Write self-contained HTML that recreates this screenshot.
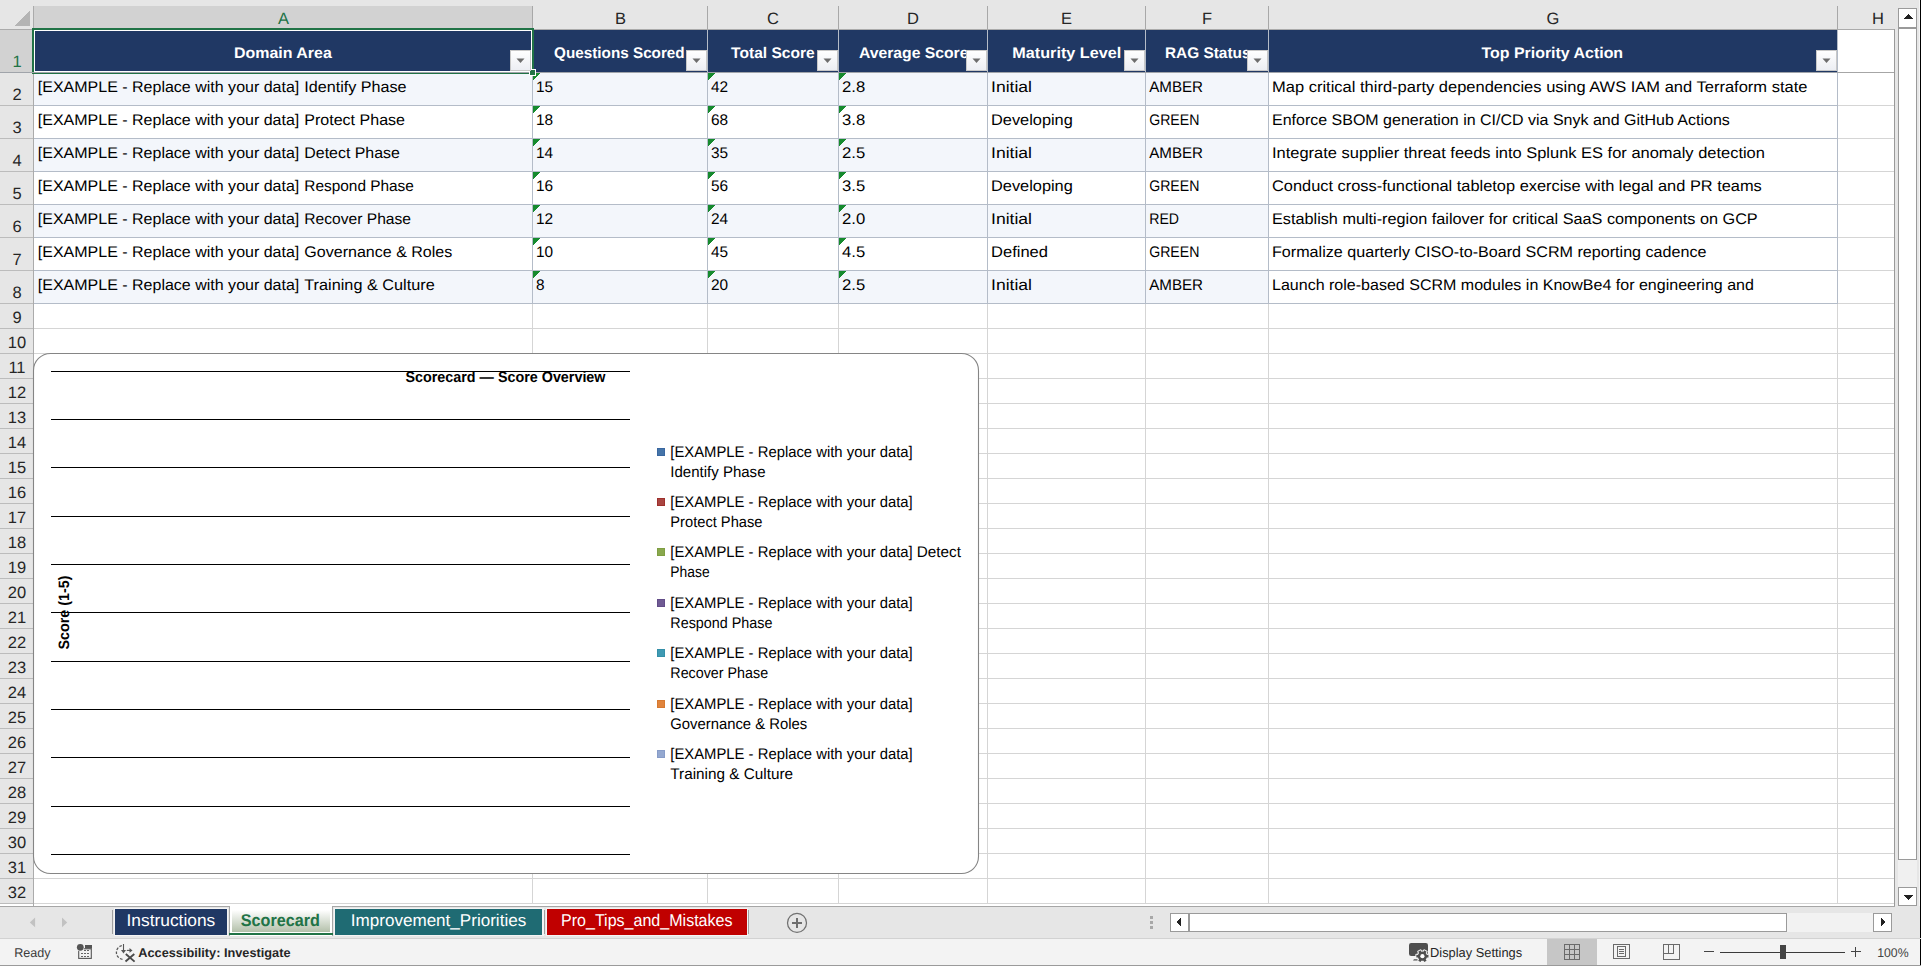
<!DOCTYPE html>
<html><head><meta charset="utf-8"><title>Scorecard</title><style>html,body{margin:0;padding:0;background:#fff;overflow:hidden;width:1921px;height:966px;}svg{display:block;} text{shape-rendering:auto;text-rendering:geometricPrecision;}</style></head><body>
<svg width="1921" height="966" viewBox="0 0 1921 966" shape-rendering="crispEdges"><defs><linearGradient id="ddg" x1="0" y1="0" x2="0" y2="1"><stop offset="0" stop-color="#ffffff"/><stop offset="1" stop-color="#eceef3"/></linearGradient><linearGradient id="tabg" x1="0" y1="0" x2="0" y2="1"><stop offset="0" stop-color="#ffffff"/><stop offset="1" stop-color="#b3c0aa"/></linearGradient></defs><rect x="0" y="0" width="1921" height="966" fill="#ffffff" />
<rect x="0" y="0" width="1920" height="6" fill="#e6e6e6" />
<rect x="0" y="6" width="1895" height="23" fill="#e6e6e6" />
<rect x="0" y="30" width="33" height="874" fill="#e6e6e6" />
<rect x="0" y="30" width="33" height="42" fill="#d2d2d2" />
<rect x="34" y="6" width="498" height="22" fill="#d2d2d2" />
<polygon points="30,10.5 30,26 14.5,26" fill="#b4b4b4"/>
<rect x="0" y="29" width="1895" height="1" fill="#ababab" />
<rect x="33" y="6" width="1" height="900" fill="#ababab" />
<rect x="532" y="6" width="1" height="23" fill="#a8a8a8" />
<rect x="707" y="6" width="1" height="23" fill="#a8a8a8" />
<rect x="838" y="6" width="1" height="23" fill="#a8a8a8" />
<rect x="987" y="6" width="1" height="23" fill="#a8a8a8" />
<rect x="1145" y="6" width="1" height="23" fill="#a8a8a8" />
<rect x="1268" y="6" width="1" height="23" fill="#a8a8a8" />
<rect x="1837" y="6" width="1" height="23" fill="#a8a8a8" />
<rect x="0" y="72" width="33" height="1" fill="#bcbcbc" />
<rect x="0" y="105" width="33" height="1" fill="#bcbcbc" />
<rect x="0" y="138" width="33" height="1" fill="#bcbcbc" />
<rect x="0" y="171" width="33" height="1" fill="#bcbcbc" />
<rect x="0" y="204" width="33" height="1" fill="#bcbcbc" />
<rect x="0" y="237" width="33" height="1" fill="#bcbcbc" />
<rect x="0" y="270" width="33" height="1" fill="#bcbcbc" />
<rect x="0" y="303" width="33" height="1" fill="#bcbcbc" />
<rect x="0" y="328" width="33" height="1" fill="#bcbcbc" />
<rect x="0" y="353" width="33" height="1" fill="#bcbcbc" />
<rect x="0" y="378" width="33" height="1" fill="#bcbcbc" />
<rect x="0" y="403" width="33" height="1" fill="#bcbcbc" />
<rect x="0" y="428" width="33" height="1" fill="#bcbcbc" />
<rect x="0" y="453" width="33" height="1" fill="#bcbcbc" />
<rect x="0" y="478" width="33" height="1" fill="#bcbcbc" />
<rect x="0" y="503" width="33" height="1" fill="#bcbcbc" />
<rect x="0" y="528" width="33" height="1" fill="#bcbcbc" />
<rect x="0" y="553" width="33" height="1" fill="#bcbcbc" />
<rect x="0" y="578" width="33" height="1" fill="#bcbcbc" />
<rect x="0" y="603" width="33" height="1" fill="#bcbcbc" />
<rect x="0" y="628" width="33" height="1" fill="#bcbcbc" />
<rect x="0" y="653" width="33" height="1" fill="#bcbcbc" />
<rect x="0" y="678" width="33" height="1" fill="#bcbcbc" />
<rect x="0" y="703" width="33" height="1" fill="#bcbcbc" />
<rect x="0" y="728" width="33" height="1" fill="#bcbcbc" />
<rect x="0" y="753" width="33" height="1" fill="#bcbcbc" />
<rect x="0" y="778" width="33" height="1" fill="#bcbcbc" />
<rect x="0" y="803" width="33" height="1" fill="#bcbcbc" />
<rect x="0" y="828" width="33" height="1" fill="#bcbcbc" />
<rect x="0" y="853" width="33" height="1" fill="#bcbcbc" />
<rect x="0" y="878" width="33" height="1" fill="#bcbcbc" />
<rect x="0" y="903" width="33" height="1" fill="#bcbcbc" />
<rect x="34" y="328" width="1860" height="1" fill="#d5d5d5" />
<rect x="34" y="353" width="1860" height="1" fill="#d5d5d5" />
<rect x="34" y="378" width="1860" height="1" fill="#d5d5d5" />
<rect x="34" y="403" width="1860" height="1" fill="#d5d5d5" />
<rect x="34" y="428" width="1860" height="1" fill="#d5d5d5" />
<rect x="34" y="453" width="1860" height="1" fill="#d5d5d5" />
<rect x="34" y="478" width="1860" height="1" fill="#d5d5d5" />
<rect x="34" y="503" width="1860" height="1" fill="#d5d5d5" />
<rect x="34" y="528" width="1860" height="1" fill="#d5d5d5" />
<rect x="34" y="553" width="1860" height="1" fill="#d5d5d5" />
<rect x="34" y="578" width="1860" height="1" fill="#d5d5d5" />
<rect x="34" y="603" width="1860" height="1" fill="#d5d5d5" />
<rect x="34" y="628" width="1860" height="1" fill="#d5d5d5" />
<rect x="34" y="653" width="1860" height="1" fill="#d5d5d5" />
<rect x="34" y="678" width="1860" height="1" fill="#d5d5d5" />
<rect x="34" y="703" width="1860" height="1" fill="#d5d5d5" />
<rect x="34" y="728" width="1860" height="1" fill="#d5d5d5" />
<rect x="34" y="753" width="1860" height="1" fill="#d5d5d5" />
<rect x="34" y="778" width="1860" height="1" fill="#d5d5d5" />
<rect x="34" y="803" width="1860" height="1" fill="#d5d5d5" />
<rect x="34" y="828" width="1860" height="1" fill="#d5d5d5" />
<rect x="34" y="853" width="1860" height="1" fill="#d5d5d5" />
<rect x="34" y="878" width="1860" height="1" fill="#d5d5d5" />
<rect x="34" y="903" width="1860" height="1" fill="#d5d5d5" />
<rect x="532" y="304" width="1" height="600" fill="#d5d5d5" />
<rect x="707" y="304" width="1" height="600" fill="#d5d5d5" />
<rect x="838" y="304" width="1" height="600" fill="#d5d5d5" />
<rect x="987" y="304" width="1" height="600" fill="#d5d5d5" />
<rect x="1145" y="304" width="1" height="600" fill="#d5d5d5" />
<rect x="1268" y="304" width="1" height="600" fill="#d5d5d5" />
<rect x="1837" y="304" width="1" height="600" fill="#d5d5d5" />
<rect x="1838" y="105" width="56" height="1" fill="#d5d5d5" />
<rect x="1838" y="138" width="56" height="1" fill="#d5d5d5" />
<rect x="1838" y="171" width="56" height="1" fill="#d5d5d5" />
<rect x="1838" y="204" width="56" height="1" fill="#d5d5d5" />
<rect x="1838" y="237" width="56" height="1" fill="#d5d5d5" />
<rect x="1838" y="270" width="56" height="1" fill="#d5d5d5" />
<rect x="1838" y="303" width="56" height="1" fill="#d5d5d5" />
<rect x="1838" y="72" width="56" height="1" fill="#a6a6a6" />
<rect x="1894" y="29" width="1" height="877" fill="#9a9a9a" />
<rect x="34" y="30" width="1803" height="42" fill="#203864" />
<rect x="34" y="73" width="1234" height="32" fill="#f3f6fb" />
<rect x="34" y="139" width="1234" height="32" fill="#f3f6fb" />
<rect x="34" y="205" width="1234" height="32" fill="#f3f6fb" />
<rect x="34" y="271" width="1234" height="32" fill="#f3f6fb" />
<rect x="34" y="105" width="1804" height="1" fill="#b4bcc8" />
<rect x="34" y="138" width="1804" height="1" fill="#b4bcc8" />
<rect x="34" y="171" width="1804" height="1" fill="#b4bcc8" />
<rect x="34" y="204" width="1804" height="1" fill="#b4bcc8" />
<rect x="34" y="237" width="1804" height="1" fill="#b4bcc8" />
<rect x="34" y="270" width="1804" height="1" fill="#b4bcc8" />
<rect x="34" y="303" width="1804" height="1" fill="#b4bcc8" />
<rect x="34" y="72" width="1804" height="1" fill="#9aa3b0" />
<rect x="532" y="73" width="1" height="231" fill="#b4bcc8" />
<rect x="707" y="73" width="1" height="231" fill="#b4bcc8" />
<rect x="838" y="73" width="1" height="231" fill="#b4bcc8" />
<rect x="987" y="73" width="1" height="231" fill="#b4bcc8" />
<rect x="1145" y="73" width="1" height="231" fill="#b4bcc8" />
<rect x="1268" y="73" width="1" height="231" fill="#b4bcc8" />
<rect x="1837" y="73" width="1" height="231" fill="#b4bcc8" />
<rect x="532" y="30" width="1" height="42" fill="#b4bcc8" />
<rect x="707" y="30" width="1" height="42" fill="#b4bcc8" />
<rect x="838" y="30" width="1" height="42" fill="#b4bcc8" />
<rect x="987" y="30" width="1" height="42" fill="#b4bcc8" />
<rect x="1145" y="30" width="1" height="42" fill="#b4bcc8" />
<rect x="1268" y="30" width="1" height="42" fill="#b4bcc8" />
<rect x="1837" y="30" width="1" height="43" fill="#b4bcc8" />
<rect x="510.5" y="50.5" width="20" height="20" fill="url(#ddg)" stroke="#c8c8c8" stroke-width="1"/>
<polygon points="516.5,58.5 524.5,58.5 520.5,63" fill="#6d6d6d" shape-rendering="auto"/>
<rect x="686.5" y="50.5" width="20" height="20" fill="url(#ddg)" stroke="#c8c8c8" stroke-width="1"/>
<polygon points="692.5,58.5 700.5,58.5 696.5,63" fill="#6d6d6d" shape-rendering="auto"/>
<rect x="817.5" y="50.5" width="20" height="20" fill="url(#ddg)" stroke="#c8c8c8" stroke-width="1"/>
<polygon points="823.5,58.5 831.5,58.5 827.5,63" fill="#6d6d6d" shape-rendering="auto"/>
<rect x="966.5" y="50.5" width="20" height="20" fill="url(#ddg)" stroke="#c8c8c8" stroke-width="1"/>
<polygon points="972.5,58.5 980.5,58.5 976.5,63" fill="#6d6d6d" shape-rendering="auto"/>
<rect x="1124.5" y="50.5" width="20" height="20" fill="url(#ddg)" stroke="#c8c8c8" stroke-width="1"/>
<polygon points="1130.5,58.5 1138.5,58.5 1134.5,63" fill="#6d6d6d" shape-rendering="auto"/>
<rect x="1247.5" y="50.5" width="20" height="20" fill="url(#ddg)" stroke="#c8c8c8" stroke-width="1"/>
<polygon points="1253.5,58.5 1261.5,58.5 1257.5,63" fill="#6d6d6d" shape-rendering="auto"/>
<rect x="1816.5" y="50.5" width="20" height="20" fill="url(#ddg)" stroke="#c8c8c8" stroke-width="1"/>
<polygon points="1822.5,58.5 1830.5,58.5 1826.5,63" fill="#6d6d6d" shape-rendering="auto"/>
<polygon points="533,73 540,73 533,80" fill="#168a2e"/>
<polygon points="533,106 540,106 533,113" fill="#168a2e"/>
<polygon points="533,139 540,139 533,146" fill="#168a2e"/>
<polygon points="533,172 540,172 533,179" fill="#168a2e"/>
<polygon points="533,205 540,205 533,212" fill="#168a2e"/>
<polygon points="533,238 540,238 533,245" fill="#168a2e"/>
<polygon points="533,271 540,271 533,278" fill="#168a2e"/>
<polygon points="708,73 715,73 708,80" fill="#168a2e"/>
<polygon points="708,106 715,106 708,113" fill="#168a2e"/>
<polygon points="708,139 715,139 708,146" fill="#168a2e"/>
<polygon points="708,172 715,172 708,179" fill="#168a2e"/>
<polygon points="708,205 715,205 708,212" fill="#168a2e"/>
<polygon points="708,238 715,238 708,245" fill="#168a2e"/>
<polygon points="708,271 715,271 708,278" fill="#168a2e"/>
<polygon points="839,73 846,73 839,80" fill="#168a2e"/>
<polygon points="839,106 846,106 839,113" fill="#168a2e"/>
<polygon points="839,139 846,139 839,146" fill="#168a2e"/>
<polygon points="839,172 846,172 839,179" fill="#168a2e"/>
<polygon points="839,205 846,205 839,212" fill="#168a2e"/>
<polygon points="839,238 846,238 839,245" fill="#168a2e"/>
<polygon points="839,271 846,271 839,278" fill="#168a2e"/>
<rect x="32" y="28" width="502" height="2" fill="#217346" />
<rect x="32" y="28" width="2" height="45" fill="#217346" />
<rect x="532" y="28" width="2" height="41" fill="#217346" />
<rect x="34" y="30" width="498" height="1" fill="#ffffff" />
<rect x="34" y="30" width="1" height="42" fill="#ffffff" />
<rect x="531" y="30" width="1" height="40" fill="#ffffff" />
<rect x="34" y="71" width="496" height="1" fill="#ffffff" />
<rect x="0" y="72" width="1838" height="1" fill="#a0a4aa" />
<rect x="32" y="73" width="498" height="1" fill="#217346" />
<rect x="529" y="69" width="7" height="7" fill="#ffffff" />
<rect x="530" y="70" width="5" height="5" fill="#217346" />
<text x="283.5" y="24" font-family="Liberation Sans" font-size="16.5" font-weight="normal" fill="#217346" text-anchor="middle" >A</text>
<text x="620.5" y="24" font-family="Liberation Sans" font-size="16.5" font-weight="normal" fill="#262626" text-anchor="middle" >B</text>
<text x="773" y="24" font-family="Liberation Sans" font-size="16.5" font-weight="normal" fill="#262626" text-anchor="middle" >C</text>
<text x="913" y="24" font-family="Liberation Sans" font-size="16.5" font-weight="normal" fill="#262626" text-anchor="middle" >D</text>
<text x="1066.5" y="24" font-family="Liberation Sans" font-size="16.5" font-weight="normal" fill="#262626" text-anchor="middle" >E</text>
<text x="1207" y="24" font-family="Liberation Sans" font-size="16.5" font-weight="normal" fill="#262626" text-anchor="middle" >F</text>
<text x="1553" y="24" font-family="Liberation Sans" font-size="16.5" font-weight="normal" fill="#262626" text-anchor="middle" >G</text>
<text x="1878" y="24" font-family="Liberation Sans" font-size="16.5" font-weight="normal" fill="#262626" text-anchor="middle" >H</text>
<text x="17" y="67" font-family="Liberation Sans" font-size="16.5" font-weight="normal" fill="#217346" text-anchor="middle" >1</text>
<text x="17" y="100" font-family="Liberation Sans" font-size="16.5" font-weight="normal" fill="#262626" text-anchor="middle" >2</text>
<text x="17" y="133" font-family="Liberation Sans" font-size="16.5" font-weight="normal" fill="#262626" text-anchor="middle" >3</text>
<text x="17" y="166" font-family="Liberation Sans" font-size="16.5" font-weight="normal" fill="#262626" text-anchor="middle" >4</text>
<text x="17" y="199" font-family="Liberation Sans" font-size="16.5" font-weight="normal" fill="#262626" text-anchor="middle" >5</text>
<text x="17" y="232" font-family="Liberation Sans" font-size="16.5" font-weight="normal" fill="#262626" text-anchor="middle" >6</text>
<text x="17" y="265" font-family="Liberation Sans" font-size="16.5" font-weight="normal" fill="#262626" text-anchor="middle" >7</text>
<text x="17" y="298" font-family="Liberation Sans" font-size="16.5" font-weight="normal" fill="#262626" text-anchor="middle" >8</text>
<text x="17" y="323" font-family="Liberation Sans" font-size="16.5" font-weight="normal" fill="#262626" text-anchor="middle" >9</text>
<text x="17" y="348" font-family="Liberation Sans" font-size="16.5" font-weight="normal" fill="#262626" text-anchor="middle" >10</text>
<text x="17" y="373" font-family="Liberation Sans" font-size="16.5" font-weight="normal" fill="#262626" text-anchor="middle" >11</text>
<text x="17" y="398" font-family="Liberation Sans" font-size="16.5" font-weight="normal" fill="#262626" text-anchor="middle" >12</text>
<text x="17" y="423" font-family="Liberation Sans" font-size="16.5" font-weight="normal" fill="#262626" text-anchor="middle" >13</text>
<text x="17" y="448" font-family="Liberation Sans" font-size="16.5" font-weight="normal" fill="#262626" text-anchor="middle" >14</text>
<text x="17" y="473" font-family="Liberation Sans" font-size="16.5" font-weight="normal" fill="#262626" text-anchor="middle" >15</text>
<text x="17" y="498" font-family="Liberation Sans" font-size="16.5" font-weight="normal" fill="#262626" text-anchor="middle" >16</text>
<text x="17" y="523" font-family="Liberation Sans" font-size="16.5" font-weight="normal" fill="#262626" text-anchor="middle" >17</text>
<text x="17" y="548" font-family="Liberation Sans" font-size="16.5" font-weight="normal" fill="#262626" text-anchor="middle" >18</text>
<text x="17" y="573" font-family="Liberation Sans" font-size="16.5" font-weight="normal" fill="#262626" text-anchor="middle" >19</text>
<text x="17" y="598" font-family="Liberation Sans" font-size="16.5" font-weight="normal" fill="#262626" text-anchor="middle" >20</text>
<text x="17" y="623" font-family="Liberation Sans" font-size="16.5" font-weight="normal" fill="#262626" text-anchor="middle" >21</text>
<text x="17" y="648" font-family="Liberation Sans" font-size="16.5" font-weight="normal" fill="#262626" text-anchor="middle" >22</text>
<text x="17" y="673" font-family="Liberation Sans" font-size="16.5" font-weight="normal" fill="#262626" text-anchor="middle" >23</text>
<text x="17" y="698" font-family="Liberation Sans" font-size="16.5" font-weight="normal" fill="#262626" text-anchor="middle" >24</text>
<text x="17" y="723" font-family="Liberation Sans" font-size="16.5" font-weight="normal" fill="#262626" text-anchor="middle" >25</text>
<text x="17" y="748" font-family="Liberation Sans" font-size="16.5" font-weight="normal" fill="#262626" text-anchor="middle" >26</text>
<text x="17" y="773" font-family="Liberation Sans" font-size="16.5" font-weight="normal" fill="#262626" text-anchor="middle" >27</text>
<text x="17" y="798" font-family="Liberation Sans" font-size="16.5" font-weight="normal" fill="#262626" text-anchor="middle" >28</text>
<text x="17" y="823" font-family="Liberation Sans" font-size="16.5" font-weight="normal" fill="#262626" text-anchor="middle" >29</text>
<text x="17" y="848" font-family="Liberation Sans" font-size="16.5" font-weight="normal" fill="#262626" text-anchor="middle" >30</text>
<text x="17" y="873" font-family="Liberation Sans" font-size="16.5" font-weight="normal" fill="#262626" text-anchor="middle" >31</text>
<text x="17" y="898" font-family="Liberation Sans" font-size="16.5" font-weight="normal" fill="#262626" text-anchor="middle" >32</text>
<text x="234.0" y="58" font-family="Liberation Sans" font-size="15.4" font-weight="bold" fill="#ffffff" text-anchor="start" textLength="97.8" lengthAdjust="spacingAndGlyphs" >Domain Area</text>
<text x="554.1" y="58" font-family="Liberation Sans" font-size="15.4" font-weight="bold" fill="#ffffff" text-anchor="start" textLength="130.6" lengthAdjust="spacingAndGlyphs" >Questions Scored</text>
<text x="731.1" y="58" font-family="Liberation Sans" font-size="15.4" font-weight="bold" fill="#ffffff" text-anchor="start" textLength="83.6" lengthAdjust="spacingAndGlyphs" >Total Score</text>
<text x="858.9" y="58" font-family="Liberation Sans" font-size="15.4" font-weight="bold" fill="#ffffff" text-anchor="start" textLength="109.6" lengthAdjust="spacingAndGlyphs" >Average Score</text>
<text x="1012.3" y="58" font-family="Liberation Sans" font-size="15.4" font-weight="bold" fill="#ffffff" text-anchor="start" textLength="108.9" lengthAdjust="spacingAndGlyphs" >Maturity Level</text>
<text x="1165.0" y="58" font-family="Liberation Sans" font-size="15.4" font-weight="bold" fill="#ffffff" text-anchor="start" textLength="85.5" lengthAdjust="spacingAndGlyphs" >RAG Status</text>
<text x="1481.5" y="58" font-family="Liberation Sans" font-size="15.4" font-weight="bold" fill="#ffffff" text-anchor="start" textLength="141.6" lengthAdjust="spacingAndGlyphs" >Top Priority Action</text>
<rect x="510.5" y="50.5" width="20" height="20" fill="url(#ddg)" stroke="#c8c8c8" stroke-width="1"/>
<polygon points="516.5,58.5 524.5,58.5 520.5,63" fill="#6d6d6d" shape-rendering="auto"/>
<rect x="686.5" y="50.5" width="20" height="20" fill="url(#ddg)" stroke="#c8c8c8" stroke-width="1"/>
<polygon points="692.5,58.5 700.5,58.5 696.5,63" fill="#6d6d6d" shape-rendering="auto"/>
<rect x="817.5" y="50.5" width="20" height="20" fill="url(#ddg)" stroke="#c8c8c8" stroke-width="1"/>
<polygon points="823.5,58.5 831.5,58.5 827.5,63" fill="#6d6d6d" shape-rendering="auto"/>
<rect x="966.5" y="50.5" width="20" height="20" fill="url(#ddg)" stroke="#c8c8c8" stroke-width="1"/>
<polygon points="972.5,58.5 980.5,58.5 976.5,63" fill="#6d6d6d" shape-rendering="auto"/>
<rect x="1124.5" y="50.5" width="20" height="20" fill="url(#ddg)" stroke="#c8c8c8" stroke-width="1"/>
<polygon points="1130.5,58.5 1138.5,58.5 1134.5,63" fill="#6d6d6d" shape-rendering="auto"/>
<rect x="1247.5" y="50.5" width="20" height="20" fill="url(#ddg)" stroke="#c8c8c8" stroke-width="1"/>
<polygon points="1253.5,58.5 1261.5,58.5 1257.5,63" fill="#6d6d6d" shape-rendering="auto"/>
<rect x="1816.5" y="50.5" width="20" height="20" fill="url(#ddg)" stroke="#c8c8c8" stroke-width="1"/>
<polygon points="1822.5,58.5 1830.5,58.5 1826.5,63" fill="#6d6d6d" shape-rendering="auto"/>
<text x="37.8" y="92" font-family="Liberation Sans" font-size="15.4" font-weight="normal" fill="#000" text-anchor="start" textLength="261.5" lengthAdjust="spacingAndGlyphs" >[EXAMPLE - Replace with your data]</text>
<text x="304.3" y="92" font-family="Liberation Sans" font-size="15.4" font-weight="normal" fill="#000" text-anchor="start" textLength="102.3" lengthAdjust="spacingAndGlyphs" >Identify Phase</text>
<text x="536" y="92" font-family="Liberation Sans" font-size="15.4" font-weight="normal" fill="#000" text-anchor="start" >15</text>
<text x="711" y="92" font-family="Liberation Sans" font-size="15.4" font-weight="normal" fill="#000" text-anchor="start" >42</text>
<text x="842" y="92" font-family="Liberation Sans" font-size="15.4" font-weight="normal" fill="#000" text-anchor="start" textLength="23.2" lengthAdjust="spacingAndGlyphs" >2.8</text>
<text x="991" y="92" font-family="Liberation Sans" font-size="15.4" font-weight="normal" fill="#000" text-anchor="start" textLength="41.0" lengthAdjust="spacingAndGlyphs" >Initial</text>
<text x="1149.2" y="92" font-family="Liberation Sans" font-size="15.4" font-weight="normal" fill="#000" text-anchor="start" textLength="53.8" lengthAdjust="spacingAndGlyphs" >AMBER</text>
<text x="1272" y="92" font-family="Liberation Sans" font-size="15.4" font-weight="normal" fill="#000" text-anchor="start" textLength="535.4" lengthAdjust="spacingAndGlyphs" >Map critical third-party dependencies using AWS IAM and Terraform state</text>
<text x="37.8" y="125" font-family="Liberation Sans" font-size="15.4" font-weight="normal" fill="#000" text-anchor="start" textLength="261.5" lengthAdjust="spacingAndGlyphs" >[EXAMPLE - Replace with your data]</text>
<text x="304.3" y="125" font-family="Liberation Sans" font-size="15.4" font-weight="normal" fill="#000" text-anchor="start" textLength="100.7" lengthAdjust="spacingAndGlyphs" >Protect Phase</text>
<text x="536" y="125" font-family="Liberation Sans" font-size="15.4" font-weight="normal" fill="#000" text-anchor="start" >18</text>
<text x="711" y="125" font-family="Liberation Sans" font-size="15.4" font-weight="normal" fill="#000" text-anchor="start" >68</text>
<text x="842" y="125" font-family="Liberation Sans" font-size="15.4" font-weight="normal" fill="#000" text-anchor="start" textLength="23.2" lengthAdjust="spacingAndGlyphs" >3.8</text>
<text x="991" y="125" font-family="Liberation Sans" font-size="15.4" font-weight="normal" fill="#000" text-anchor="start" textLength="81.8" lengthAdjust="spacingAndGlyphs" >Developing</text>
<text x="1149.2" y="125" font-family="Liberation Sans" font-size="15.4" font-weight="normal" fill="#000" text-anchor="start" textLength="50.2" lengthAdjust="spacingAndGlyphs" >GREEN</text>
<text x="1272" y="125" font-family="Liberation Sans" font-size="15.4" font-weight="normal" fill="#000" text-anchor="start" textLength="457.8" lengthAdjust="spacingAndGlyphs" >Enforce SBOM generation in CI/CD via Snyk and GitHub Actions</text>
<text x="37.8" y="158" font-family="Liberation Sans" font-size="15.4" font-weight="normal" fill="#000" text-anchor="start" textLength="261.5" lengthAdjust="spacingAndGlyphs" >[EXAMPLE - Replace with your data]</text>
<text x="304.3" y="158" font-family="Liberation Sans" font-size="15.4" font-weight="normal" fill="#000" text-anchor="start" textLength="95.6" lengthAdjust="spacingAndGlyphs" >Detect Phase</text>
<text x="536" y="158" font-family="Liberation Sans" font-size="15.4" font-weight="normal" fill="#000" text-anchor="start" >14</text>
<text x="711" y="158" font-family="Liberation Sans" font-size="15.4" font-weight="normal" fill="#000" text-anchor="start" >35</text>
<text x="842" y="158" font-family="Liberation Sans" font-size="15.4" font-weight="normal" fill="#000" text-anchor="start" textLength="23.2" lengthAdjust="spacingAndGlyphs" >2.5</text>
<text x="991" y="158" font-family="Liberation Sans" font-size="15.4" font-weight="normal" fill="#000" text-anchor="start" textLength="41.0" lengthAdjust="spacingAndGlyphs" >Initial</text>
<text x="1149.2" y="158" font-family="Liberation Sans" font-size="15.4" font-weight="normal" fill="#000" text-anchor="start" textLength="53.8" lengthAdjust="spacingAndGlyphs" >AMBER</text>
<text x="1272" y="158" font-family="Liberation Sans" font-size="15.4" font-weight="normal" fill="#000" text-anchor="start" textLength="492.9" lengthAdjust="spacingAndGlyphs" >Integrate supplier threat feeds into Splunk ES for anomaly detection</text>
<text x="37.8" y="191" font-family="Liberation Sans" font-size="15.4" font-weight="normal" fill="#000" text-anchor="start" textLength="261.5" lengthAdjust="spacingAndGlyphs" >[EXAMPLE - Replace with your data]</text>
<text x="304.3" y="191" font-family="Liberation Sans" font-size="15.4" font-weight="normal" fill="#000" text-anchor="start" textLength="109.6" lengthAdjust="spacingAndGlyphs" >Respond Phase</text>
<text x="536" y="191" font-family="Liberation Sans" font-size="15.4" font-weight="normal" fill="#000" text-anchor="start" >16</text>
<text x="711" y="191" font-family="Liberation Sans" font-size="15.4" font-weight="normal" fill="#000" text-anchor="start" >56</text>
<text x="842" y="191" font-family="Liberation Sans" font-size="15.4" font-weight="normal" fill="#000" text-anchor="start" textLength="23.2" lengthAdjust="spacingAndGlyphs" >3.5</text>
<text x="991" y="191" font-family="Liberation Sans" font-size="15.4" font-weight="normal" fill="#000" text-anchor="start" textLength="81.8" lengthAdjust="spacingAndGlyphs" >Developing</text>
<text x="1149.2" y="191" font-family="Liberation Sans" font-size="15.4" font-weight="normal" fill="#000" text-anchor="start" textLength="50.2" lengthAdjust="spacingAndGlyphs" >GREEN</text>
<text x="1272" y="191" font-family="Liberation Sans" font-size="15.4" font-weight="normal" fill="#000" text-anchor="start" textLength="489.8" lengthAdjust="spacingAndGlyphs" >Conduct cross-functional tabletop exercise with legal and PR teams</text>
<text x="37.8" y="224" font-family="Liberation Sans" font-size="15.4" font-weight="normal" fill="#000" text-anchor="start" textLength="261.5" lengthAdjust="spacingAndGlyphs" >[EXAMPLE - Replace with your data]</text>
<text x="304.3" y="224" font-family="Liberation Sans" font-size="15.4" font-weight="normal" fill="#000" text-anchor="start" textLength="106.7" lengthAdjust="spacingAndGlyphs" >Recover Phase</text>
<text x="536" y="224" font-family="Liberation Sans" font-size="15.4" font-weight="normal" fill="#000" text-anchor="start" >12</text>
<text x="711" y="224" font-family="Liberation Sans" font-size="15.4" font-weight="normal" fill="#000" text-anchor="start" >24</text>
<text x="842" y="224" font-family="Liberation Sans" font-size="15.4" font-weight="normal" fill="#000" text-anchor="start" textLength="23.2" lengthAdjust="spacingAndGlyphs" >2.0</text>
<text x="991" y="224" font-family="Liberation Sans" font-size="15.4" font-weight="normal" fill="#000" text-anchor="start" textLength="41.0" lengthAdjust="spacingAndGlyphs" >Initial</text>
<text x="1149.2" y="224" font-family="Liberation Sans" font-size="15.4" font-weight="normal" fill="#000" text-anchor="start" textLength="29.8" lengthAdjust="spacingAndGlyphs" >RED</text>
<text x="1272" y="224" font-family="Liberation Sans" font-size="15.4" font-weight="normal" fill="#000" text-anchor="start" textLength="485.7" lengthAdjust="spacingAndGlyphs" >Establish multi-region failover for critical SaaS components on GCP</text>
<text x="37.8" y="257" font-family="Liberation Sans" font-size="15.4" font-weight="normal" fill="#000" text-anchor="start" textLength="261.5" lengthAdjust="spacingAndGlyphs" >[EXAMPLE - Replace with your data]</text>
<text x="304.3" y="257" font-family="Liberation Sans" font-size="15.4" font-weight="normal" fill="#000" text-anchor="start" textLength="148.0" lengthAdjust="spacingAndGlyphs" >Governance &amp; Roles</text>
<text x="536" y="257" font-family="Liberation Sans" font-size="15.4" font-weight="normal" fill="#000" text-anchor="start" >10</text>
<text x="711" y="257" font-family="Liberation Sans" font-size="15.4" font-weight="normal" fill="#000" text-anchor="start" >45</text>
<text x="842" y="257" font-family="Liberation Sans" font-size="15.4" font-weight="normal" fill="#000" text-anchor="start" textLength="23.2" lengthAdjust="spacingAndGlyphs" >4.5</text>
<text x="991" y="257" font-family="Liberation Sans" font-size="15.4" font-weight="normal" fill="#000" text-anchor="start" textLength="57.0" lengthAdjust="spacingAndGlyphs" >Defined</text>
<text x="1149.2" y="257" font-family="Liberation Sans" font-size="15.4" font-weight="normal" fill="#000" text-anchor="start" textLength="50.2" lengthAdjust="spacingAndGlyphs" >GREEN</text>
<text x="1272" y="257" font-family="Liberation Sans" font-size="15.4" font-weight="normal" fill="#000" text-anchor="start" textLength="434.5" lengthAdjust="spacingAndGlyphs" >Formalize quarterly CISO-to-Board SCRM reporting cadence</text>
<text x="37.8" y="290" font-family="Liberation Sans" font-size="15.4" font-weight="normal" fill="#000" text-anchor="start" textLength="261.5" lengthAdjust="spacingAndGlyphs" >[EXAMPLE - Replace with your data]</text>
<text x="304.3" y="290" font-family="Liberation Sans" font-size="15.4" font-weight="normal" fill="#000" text-anchor="start" textLength="130.4" lengthAdjust="spacingAndGlyphs" >Training &amp; Culture</text>
<text x="536" y="290" font-family="Liberation Sans" font-size="15.4" font-weight="normal" fill="#000" text-anchor="start" >8</text>
<text x="711" y="290" font-family="Liberation Sans" font-size="15.4" font-weight="normal" fill="#000" text-anchor="start" >20</text>
<text x="842" y="290" font-family="Liberation Sans" font-size="15.4" font-weight="normal" fill="#000" text-anchor="start" textLength="23.2" lengthAdjust="spacingAndGlyphs" >2.5</text>
<text x="991" y="290" font-family="Liberation Sans" font-size="15.4" font-weight="normal" fill="#000" text-anchor="start" textLength="41.0" lengthAdjust="spacingAndGlyphs" >Initial</text>
<text x="1149.2" y="290" font-family="Liberation Sans" font-size="15.4" font-weight="normal" fill="#000" text-anchor="start" textLength="53.8" lengthAdjust="spacingAndGlyphs" >AMBER</text>
<text x="1272" y="290" font-family="Liberation Sans" font-size="15.4" font-weight="normal" fill="#000" text-anchor="start" textLength="481.9" lengthAdjust="spacingAndGlyphs" >Launch role-based SCRM modules in KnowBe4 for engineering and</text>
<rect x="33.5" y="353.5" width="945" height="520" rx="17" ry="17" fill="#ffffff" stroke="#858585" stroke-width="1.1" shape-rendering="auto"/>
<rect x="51" y="371" width="579" height="1" fill="#000000" />
<rect x="51" y="419" width="579" height="1" fill="#000000" />
<rect x="51" y="467" width="579" height="1" fill="#000000" />
<rect x="51" y="516" width="579" height="1" fill="#000000" />
<rect x="51" y="564" width="579" height="1" fill="#000000" />
<rect x="51" y="612" width="579" height="1" fill="#000000" />
<rect x="51" y="661" width="579" height="1" fill="#000000" />
<rect x="51" y="709" width="579" height="1" fill="#000000" />
<rect x="51" y="757" width="579" height="1" fill="#000000" />
<rect x="51" y="806" width="579" height="1" fill="#000000" />
<rect x="51" y="854" width="579" height="1" fill="#000000" />
<text x="405.5" y="382" font-family="Liberation Sans" font-size="15" font-weight="bold" fill="#000" text-anchor="start" textLength="200" lengthAdjust="spacingAndGlyphs" >Scorecard — Score Overview</text>
<text x="0" y="0" transform="translate(69,649.5) rotate(-90)" font-family="Liberation Sans" font-size="15" font-weight="bold" fill="#000" textLength="74" lengthAdjust="spacingAndGlyphs">Score (1-5)</text>
<rect x="657.5" y="448.5" width="7" height="7" fill="#4574a8" stroke="#3a67a0" stroke-width="1"/>
<text x="670.3" y="457" font-family="Liberation Sans" font-size="15.4" font-weight="normal" fill="#000" text-anchor="start" textLength="242.4" lengthAdjust="spacingAndGlyphs" >[EXAMPLE - Replace with your data]</text>
<text x="670.3" y="477" font-family="Liberation Sans" font-size="15.4" font-weight="normal" fill="#000" text-anchor="start" textLength="95.2" lengthAdjust="spacingAndGlyphs" >Identify Phase</text>
<rect x="657.5" y="498.5" width="7" height="7" fill="#a94541" stroke="#9e302c" stroke-width="1"/>
<text x="670.3" y="507" font-family="Liberation Sans" font-size="15.4" font-weight="normal" fill="#000" text-anchor="start" textLength="242.4" lengthAdjust="spacingAndGlyphs" >[EXAMPLE - Replace with your data]</text>
<text x="670.3" y="527" font-family="Liberation Sans" font-size="15.4" font-weight="normal" fill="#000" text-anchor="start" textLength="92.2" lengthAdjust="spacingAndGlyphs" >Protect Phase</text>
<rect x="657.5" y="548.5" width="7" height="7" fill="#89a84d" stroke="#7f9e42" stroke-width="1"/>
<text x="670.3" y="557" font-family="Liberation Sans" font-size="15.4" font-weight="normal" fill="#000" text-anchor="start" textLength="242.4" lengthAdjust="spacingAndGlyphs" >[EXAMPLE - Replace with your data]</text>
<text x="916.8" y="557" font-family="Liberation Sans" font-size="15.4" font-weight="normal" fill="#000" text-anchor="start" textLength="44.2" lengthAdjust="spacingAndGlyphs" >Detect</text>
<text x="670.3" y="577" font-family="Liberation Sans" font-size="15.4" font-weight="normal" fill="#000" text-anchor="start" textLength="39.3" lengthAdjust="spacingAndGlyphs" >Phase</text>
<rect x="657.5" y="599.5" width="7" height="7" fill="#6f5a93" stroke="#624c88" stroke-width="1"/>
<text x="670.3" y="608" font-family="Liberation Sans" font-size="15.4" font-weight="normal" fill="#000" text-anchor="start" textLength="242.4" lengthAdjust="spacingAndGlyphs" >[EXAMPLE - Replace with your data]</text>
<text x="670.3" y="628" font-family="Liberation Sans" font-size="15.4" font-weight="normal" fill="#000" text-anchor="start" textLength="102.2" lengthAdjust="spacingAndGlyphs" >Respond Phase</text>
<rect x="657.5" y="649.5" width="7" height="7" fill="#3f9ab3" stroke="#348fa8" stroke-width="1"/>
<text x="670.3" y="658" font-family="Liberation Sans" font-size="15.4" font-weight="normal" fill="#000" text-anchor="start" textLength="242.4" lengthAdjust="spacingAndGlyphs" >[EXAMPLE - Replace with your data]</text>
<text x="670.3" y="678" font-family="Liberation Sans" font-size="15.4" font-weight="normal" fill="#000" text-anchor="start" textLength="97.8" lengthAdjust="spacingAndGlyphs" >Recover Phase</text>
<rect x="657.5" y="700.5" width="7" height="7" fill="#e0843c" stroke="#d67930" stroke-width="1"/>
<text x="670.3" y="709" font-family="Liberation Sans" font-size="15.4" font-weight="normal" fill="#000" text-anchor="start" textLength="242.4" lengthAdjust="spacingAndGlyphs" >[EXAMPLE - Replace with your data]</text>
<text x="670.3" y="729" font-family="Liberation Sans" font-size="15.4" font-weight="normal" fill="#000" text-anchor="start" textLength="136.9" lengthAdjust="spacingAndGlyphs" >Governance &amp; Roles</text>
<rect x="657.5" y="750.5" width="7" height="7" fill="#94a8d0" stroke="#879cc8" stroke-width="1"/>
<text x="670.3" y="759" font-family="Liberation Sans" font-size="15.4" font-weight="normal" fill="#000" text-anchor="start" textLength="242.4" lengthAdjust="spacingAndGlyphs" >[EXAMPLE - Replace with your data]</text>
<text x="670.3" y="779" font-family="Liberation Sans" font-size="15.4" font-weight="normal" fill="#000" text-anchor="start" textLength="122.7" lengthAdjust="spacingAndGlyphs" >Training &amp; Culture</text>
<rect x="1895" y="0" width="25" height="906" fill="#e6e6e6" />
<rect x="1898" y="8" width="19" height="20" fill="#9a9a9a" />
<rect x="1899" y="9" width="17" height="18" fill="#ffffff" />
<polygon points="1903,19 1913,19 1908,14" fill="#222"/>
<rect x="1898" y="28" width="19" height="832" fill="#9a9a9a" />
<rect x="1899" y="29" width="17" height="830" fill="#ffffff" />
<rect x="1898" y="860" width="19" height="27" fill="#f0f0f0" />
<rect x="1898" y="887" width="19" height="19" fill="#9a9a9a" />
<rect x="1899" y="888" width="17" height="17" fill="#ffffff" />
<polygon points="1903,895 1913,895 1908,900" fill="#222"/>
<rect x="1920" y="0" width="1" height="966" fill="#000000" />
<rect x="1919" y="0" width="1" height="938" fill="#f4f4f4" />
<rect x="0" y="906" width="1920" height="32" fill="#e6e6e6" />
<rect x="0" y="906" width="1895" height="1" fill="#a6a6a6" />
<rect x="0" y="938" width="1921" height="1" fill="#d2d2d2" />
<polygon points="35.1,917.6 35.1,927.2 29.8,922.4" fill="#c2c2c2" shape-rendering="auto"/>
<polygon points="62,917.6 62,927.2 67.2,922.4" fill="#c2c2c2" shape-rendering="auto"/>
<rect x="112" y="910" width="1" height="24" fill="#a0a0a0" />
<rect x="114" y="908" width="114" height="28" fill="#f4f4f4" />
<rect x="115" y="909" width="112" height="26" fill="#203864" />
<rect x="230" y="904" width="102" height="32" fill="#ffffff" />
<rect x="229" y="906" width="1" height="30" fill="#a6a6a6" />
<rect x="332" y="906" width="1" height="30" fill="#a6a6a6" />
<rect x="232" y="910" width="98" height="22" fill="url(#tabg)"/>
<rect x="229" y="933" width="104" height="2" fill="#217346" />
<rect x="334" y="908" width="210" height="28" fill="#f4f4f4" />
<rect x="335" y="909" width="207" height="26" fill="#1f6b73" />
<rect x="544" y="910" width="1" height="24" fill="#a0a0a0" />
<rect x="546" y="908" width="202" height="28" fill="#f4f4f4" />
<rect x="547" y="909" width="200" height="26" fill="#c00000" />
<rect x="748" y="910" width="1" height="24" fill="#a0a0a0" />
<circle cx="797" cy="922.9" r="9.5" fill="none" stroke="#707070" stroke-width="1.25" shape-rendering="auto"/>
<rect x="792" y="922" width="10" height="2" fill="#6e6e6e" />
<rect x="796" y="918" width="2" height="10" fill="#6e6e6e" />
<text x="126.5" y="926" font-family="Liberation Sans" font-size="17" font-weight="normal" fill="#ffffff" text-anchor="start" textLength="88.8" lengthAdjust="spacingAndGlyphs" >Instructions</text>
<text x="240.8" y="926" font-family="Liberation Sans" font-size="17" font-weight="bold" fill="#217346" text-anchor="start" textLength="79.1" lengthAdjust="spacingAndGlyphs" >Scorecard</text>
<text x="350.8" y="926" font-family="Liberation Sans" font-size="17" font-weight="normal" fill="#ffffff" text-anchor="start" textLength="175.4" lengthAdjust="spacingAndGlyphs" >Improvement_Priorities</text>
<text x="561" y="926" font-family="Liberation Sans" font-size="17" font-weight="normal" fill="#ffffff" text-anchor="start" textLength="171.5" lengthAdjust="spacingAndGlyphs" >Pro_Tips_and_Mistakes</text>
<rect x="1150" y="916" width="3" height="3" fill="#a8a8a8" />
<rect x="1150" y="921" width="3" height="3" fill="#a8a8a8" />
<rect x="1150" y="926" width="3" height="3" fill="#a8a8a8" />
<rect x="1170" y="913" width="19" height="19" fill="#9a9a9a" />
<rect x="1171" y="914" width="17" height="17" fill="#ffffff" />
<polygon points="1176,922 1181,917.5 1181,926.5" fill="#222"/>
<rect x="1189" y="913" width="598" height="19" fill="#9a9a9a" />
<rect x="1190" y="914" width="596" height="17" fill="#ffffff" />
<rect x="1787" y="913" width="86" height="19" fill="#f2f2f2" />
<rect x="1873" y="913" width="19" height="19" fill="#9a9a9a" />
<rect x="1874" y="914" width="17" height="17" fill="#ffffff" />
<polygon points="1881,917.5 1881,926.5 1886,922" fill="#222"/>
<rect x="0" y="939" width="1920" height="26" fill="#f3f3f3" />
<rect x="0" y="965" width="1921" height="1" fill="#9a9a9a" />
<text x="14.2" y="957" font-family="Liberation Sans" font-size="12.6" font-weight="normal" fill="#3b3b3b" text-anchor="start" textLength="36.4" lengthAdjust="spacingAndGlyphs" >Ready</text>
<g shape-rendering="auto"><rect x="78.7" y="948.8" width="12.6" height="9.6" fill="none" stroke="#555" stroke-width="1.1"/><rect x="85" y="945" width="7" height="3.6" fill="#555"/><circle cx="80.3" cy="947.3" r="3.9" fill="#f3f3f3"/><circle cx="80.3" cy="947.3" r="3.4" fill="#555"/></g>
<rect x="84" y="950" width="2" height="1" fill="#666" />
<rect x="87" y="950" width="2" height="1" fill="#666" />
<rect x="81" y="953" width="2" height="1" fill="#666" />
<rect x="84" y="953" width="2" height="1" fill="#666" />
<rect x="87" y="953" width="2" height="1" fill="#666" />
<rect x="81" y="956" width="2" height="1" fill="#666" />
<rect x="84" y="956" width="2" height="1" fill="#666" />
<rect x="87" y="956" width="2" height="1" fill="#666" />
<g shape-rendering="auto" fill="none" stroke="#555"><path d="M121.8,945.6 A7,7 0 0 0 123,959.4" stroke-width="1.3" stroke-dasharray="2.6,1.5"/><path d="M123.5,944 V951" stroke-width="1.1"/><path d="M126.8,950.4 H130" stroke-width="1.1"/><path d="M125.8,954 L134.6,961.6 M125.5,961.4 L134.3,954" stroke="#4a4a4a" stroke-width="1.9"/></g>
<g shape-rendering="auto" fill="#555"><polygon points="121,950 126,950 123.5,953.5"/><polygon points="129.5,948 132.5,950.4 129.5,952.8"/></g>
<text x="138.3" y="957" font-family="Liberation Sans" font-size="12.6" font-weight="bold" fill="#262626" text-anchor="start" textLength="152.2" lengthAdjust="spacingAndGlyphs" >Accessibility: Investigate</text>
<g shape-rendering="auto"><rect x="1409" y="943" width="19" height="13" rx="2.2" fill="#4f4f4f"/><polygon points="1426.83,954.95 1428.45,954.85 1428.45,957.55 1426.83,957.45 1426.38,958.50 1425.69,959.41 1426.60,960.76 1424.25,962.12 1423.53,960.66 1422.40,960.80 1421.27,960.66 1420.55,962.12 1418.20,960.76 1419.11,959.41 1418.42,958.50 1417.97,957.45 1416.35,957.55 1416.35,954.85 1417.97,954.95 1418.42,953.90 1419.11,952.99 1418.20,951.64 1420.55,950.28 1421.27,951.74 1422.40,951.60 1423.53,951.74 1424.25,950.28 1426.60,951.64 1425.69,952.99 1426.38,953.90" fill="#4f4f4f" stroke="#f3f3f3" stroke-width="2" stroke-linejoin="round"/><polygon points="1426.83,954.95 1428.45,954.85 1428.45,957.55 1426.83,957.45 1426.38,958.50 1425.69,959.41 1426.60,960.76 1424.25,962.12 1423.53,960.66 1422.40,960.80 1421.27,960.66 1420.55,962.12 1418.20,960.76 1419.11,959.41 1418.42,958.50 1417.97,957.45 1416.35,957.55 1416.35,954.85 1417.97,954.95 1418.42,953.90 1419.11,952.99 1418.20,951.64 1420.55,950.28 1421.27,951.74 1422.40,951.60 1423.53,951.74 1424.25,950.28 1426.60,951.64 1425.69,952.99 1426.38,953.90" fill="#4f4f4f"/><circle cx="1422.4" cy="956.2" r="2.1" fill="#ffffff"/><path d="M1413,960.6 L1414,959.3 H1417.5 V960.6 Z" fill="#4f4f4f"/></g>
<text x="1430" y="957" font-family="Liberation Sans" font-size="13" font-weight="normal" fill="#262626" text-anchor="start" textLength="92.1" lengthAdjust="spacingAndGlyphs" >Display Settings</text>
<rect x="1547" y="939" width="50" height="26" fill="#c6c6c6" />
<g fill="none" stroke="#6a6a6a" stroke-width="1"><rect x="1564.5" y="944.5" width="15" height="15"/><path d="M1569.5,944.5 V959.5 M1574.5,944.5 V959.5 M1564.5,949.5 H1579.5 M1564.5,954.5 H1579.5"/><rect x="1613.5" y="944.5" width="16" height="14"/><rect x="1617.5" y="946.5" width="8" height="10"/><path d="M1619,949.5 H1624 M1619,951.5 H1624 M1619,953.5 H1624"/><rect x="1663.5" y="944.5" width="16" height="15"/><path d="M1663.5,953.5 H1673.5 V944.5 M1668.5,944.5 V953.5"/></g>
<rect x="1704" y="951" width="10" height="1" fill="#444" />
<rect x="1720" y="952" width="125" height="1" fill="#3a3a3a" />
<rect x="1780" y="945" width="6" height="14" fill="#444" />
<rect x="1851" y="951" width="10" height="1" fill="#444" />
<rect x="1855" y="947" width="1" height="10" fill="#444" />
<text x="1877.2" y="957" font-family="Liberation Sans" font-size="12.6" font-weight="normal" fill="#444" text-anchor="start" textLength="31.4" lengthAdjust="spacingAndGlyphs" >100%</text></svg>
</body></html>
